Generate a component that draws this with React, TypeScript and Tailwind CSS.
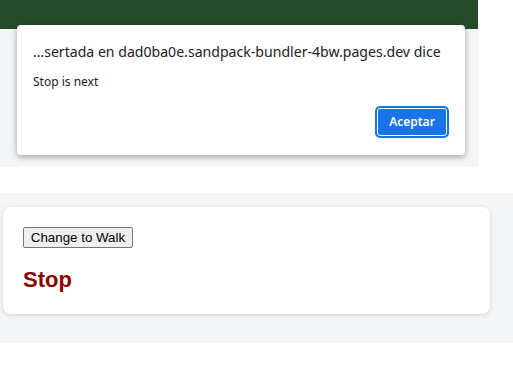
import React from "react";

export default function App() {
  return (
    <div className="relative w-[513px] h-[375px] bg-white overflow-hidden">
      <div className="w-[478px]">
        <div className="h-[29px] bg-[#264b2b]" />
        <div className="h-[138px] bg-[#f4f5f7]" />
      </div>
      <div className="h-[26px]" />
      <div className="h-[150px] w-[513px] bg-[#f4f5f7] pt-[14px] pl-[3px]">
        <div className="w-[487px] h-[107px] rounded-[8px] bg-white shadow-[0_1px_4px_rgba(0,0,0,0.15)] p-[20px] flex flex-col items-start gap-[19px]">
          <button className="h-[21px] w-[110px] px-[6px] border border-[#767676] rounded-[2px] bg-[#efefef] text-[13.33px] leading-[19px] text-black font-['Liberation_Sans',Arial,sans-serif]">
            Change to Walk
          </button>
          <div className="text-[22px] leading-[25px] font-bold text-[#8b0000] font-['Liberation_Sans',Arial,sans-serif]">
            Stop
          </div>
        </div>
      </div>

      <div className="absolute left-[17px] top-[25px] w-[448px] h-[130px] bg-white rounded-[4px] shadow-[0_2px_6px_rgba(0,0,0,0.35)] font-['Noto_Sans','Open_Sans',sans-serif] px-[16px] pt-[16px]">
        <div className="text-[14.1px] leading-[22px] text-[#202124] whitespace-nowrap">
          …sertada en dad0ba0e.sandpack-bundler-4bw.pages.dev dice
        </div>
        <div className="mt-[11px] text-[12px] leading-[16px] text-[#202124]">Stop is next</div>
        <div className="flex justify-end mt-[16px]">
          <div className="w-[74px] h-[32px] rounded-[5px] bg-[#1a73e8] p-[2px]">
            <div className="w-full h-full rounded-[3px] border border-white flex items-center justify-center text-white text-[12px] font-semibold">
              Aceptar
            </div>
          </div>
        </div>
      </div>
    </div>
  );
}
